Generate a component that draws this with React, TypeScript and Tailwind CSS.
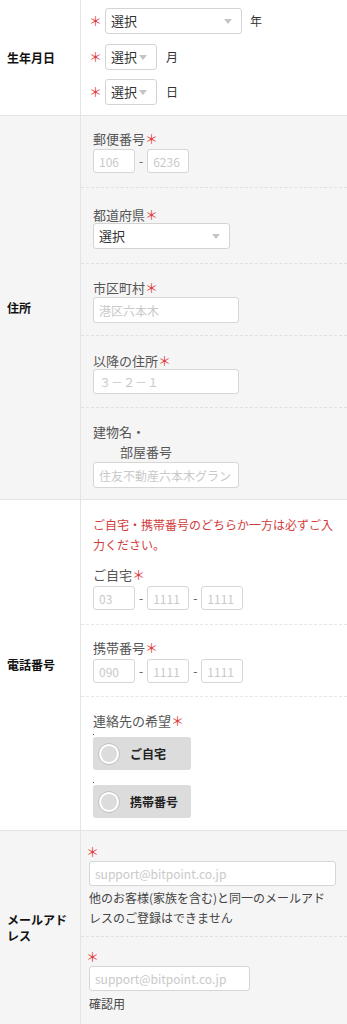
import React from "react";

const font = { fontFamily: '"Noto Sans CJK JP", "Noto Sans", sans-serif' };

const Star = () => <span className="text-[#e03c3c]">＊</span>;

// gray caret used by the fake selects
const Caret = () => (
  <svg width="8" height="5" viewBox="0 0 8 5" className="shrink-0">
    <path d="M0 0 L8 0 L4 5 Z" fill="#c4c4c4" />
  </svg>
);

const Select = ({ width, height = 26 }: { width: number; height?: number }) => (
  <div
    className="flex items-center justify-between border border-[#d4d4d4] rounded-[3px] bg-white pl-[5px] pr-[9px] text-[13px] text-[#333]"
    style={{ width, height }}
  >
    <span>選択</span>
    <Caret />
  </div>
);

const Input = ({
  width,
  height = 24,
  placeholder,
}: {
  width: number;
  height?: number;
  placeholder: string;
}) => (
  <input
    readOnly
    placeholder={placeholder}
    className="block border border-[#d6d6d6] rounded-[3px] bg-white px-[5px] text-[12px] text-[#333] placeholder:text-[#c9c9c9] outline-none"
    style={{ width, height }}
  />
);

const Dash = () => <span className="text-[12px] text-[#555] px-[4px]">-</span>;

const Section = ({
  label,
  gray,
  children,
}: {
  label: React.ReactNode;
  gray?: boolean;
  children: React.ReactNode;
}) => (
  <div className={`flex border-b border-[#e4e4e4] ${gray ? "bg-[#f5f5f5]" : "bg-white"}`}>
    <div className="w-[81px] shrink-0 flex items-center px-[7px] border-r border-[#e4e4e4] text-[12px] leading-[16px] font-bold text-[#111]">
      {label}
    </div>
    <div className="flex-1 min-w-0">{children}</div>
  </div>
);

const Label = ({ children }: { children: React.ReactNode }) => (
  <div className="text-[13px] leading-[16px] text-[#555]">{children}</div>
);

const Radio = ({ text }: { text: string }) => (
  <div>
    <div className="w-[1px] h-[1px] bg-[#555]" />
    <div className="mt-[2px] w-[98px] h-[33px] rounded-[3px] bg-[#dcdcdc] flex items-center pl-[5px] gap-[10px]">
      <div className="w-[22px] h-[22px] rounded-full border border-[#bfbfbf] bg-white p-[2px]">
        <div className="w-full h-full rounded-full bg-[#dcdcdc]" />
      </div>
      <span className="text-[12px] font-bold text-[#222]">{text}</span>
    </div>
  </div>
);

export default function App() {
  return (
    <div className="w-[347px] bg-white" style={font}>
      {/* 生年月日 */}
      <Section label="生年月日">
        <div className="flex flex-col pt-[8px] pb-[10px] pl-[8px]">
          <div className="flex items-center">
            <span className="w-[13px] text-[13px] text-center text-[#e03c3c]">＊</span>
            <div className="ml-[3px]">
              <Select width={137} />
            </div>
            <span className="ml-[8px] text-[12px] text-[#333]">年</span>
          </div>
          <div className="flex items-center mt-[10px]">
            <span className="w-[13px] text-[13px] text-center text-[#e03c3c]">＊</span>
            <div className="ml-[3px]">
              <Select width={52} />
            </div>
            <span className="ml-[9px] text-[12px] text-[#333]">月</span>
          </div>
          <div className="flex items-center mt-[9px]">
            <span className="w-[13px] text-[13px] text-center text-[#e03c3c]">＊</span>
            <div className="ml-[3px]">
              <Select width={52} />
            </div>
            <span className="ml-[9px] text-[12px] text-[#333]">日</span>
          </div>
        </div>
      </Section>

      {/* 住所 */}
      <Section label="住所" gray>
        <div className="px-[12px] pt-[15px] pb-[14px] border-b border-dashed border-[#e0e0e0]">
          <Label>
            郵便番号<Star />
          </Label>
          <div className="mt-[2px] flex items-center">
            <Input width={42} placeholder="106" />
            <Dash />
            <Input width={42} placeholder="6236" />
          </div>
        </div>
        <div className="px-[12px] pt-[19px] pb-[14px] border-b border-dashed border-[#e0e0e0]">
          <Label>
            都道府県<Star />
          </Label>
          <Select width={137} />
        </div>
        <div className="px-[12px] pt-[16px] pb-[12px] border-b border-dashed border-[#e0e0e0]">
          <Label>
            市区町村<Star />
          </Label>
          <div className="mt-[1px]">
            <Input width={146} height={26} placeholder="港区六本木" />
          </div>
        </div>
        <div className="px-[12px] pt-[17px] pb-[13px] border-b border-dashed border-[#e0e0e0]">
          <Label>
            以降の住所<Star />
          </Label>
          <Input width={146} height={25} placeholder="３－２－１" />
        </div>
        <div className="px-[12px] pt-[14px] pb-[11px]">
          <div className="text-[13px] leading-[20px] text-[#555]">建物名・</div>
          <div className="text-[13px] leading-[20px] text-[#555] pl-[27px]">部屋番号</div>
          <Input width={146} height={26} placeholder="住友不動産六本木グランドタワー" />
        </div>
      </Section>

      {/* 電話番号 */}
      <Section label="電話番号">
        <div className="px-[12px] pt-[15px] pb-[14px] border-b border-dashed border-[#e6e6e6]">
          <div className="text-[12px] leading-[20px] text-[#d23c3c]">
            ご自宅・携帯番号のどちらか一方は必ずご入力ください。
          </div>
          <div className="mt-[10px] text-[13px] leading-[20px] text-[#555]">
            ご自宅<Star />
          </div>
          <div className="mt-[1px] flex items-center">
            <Input width={42} placeholder="03" />
            <Dash />
            <Input width={42} placeholder="1111" />
            <Dash />
            <Input width={42} placeholder="1111" />
          </div>
        </div>
        <div className="px-[12px] pt-[13px] pb-[13px] border-b border-dashed border-[#e6e6e6]">
          <div className="text-[13px] leading-[20px] text-[#555]">
            携帯番号<Star />
          </div>
          <div className="mt-[1px] flex items-center">
            <Input width={42} placeholder="090" />
            <Dash />
            <Input width={42} placeholder="1111" />
            <Dash />
            <Input width={42} placeholder="1111" />
          </div>
        </div>
        <div className="px-[12px] pt-[14px] pb-[12px]">
          <div className="text-[13px] leading-[20px] text-[#555]">
            連絡先の希望<Star />
          </div>
          <div className="mt-[3px] flex flex-col gap-[12px]">
            <Radio text="ご自宅" />
            <Radio text="携帯番号" />
          </div>
        </div>
      </Section>

      {/* メールアドレス */}
      <Section
        label={
          <span>
            メールアド
            <br />
            レス
          </span>
        }
        gray
      >
        <div className="pl-[8px] pr-[11px] pt-[13px] pb-[8px] border-b border-dashed border-[#e0e0e0]">
          <div className="text-[13px] leading-[16px] -ml-[3px]">
            <Star />
          </div>
          <div className="mt-[1px]">
            <Input width={247} height={25} placeholder="support@bitpoint.co.jp" />
          </div>
          <div className="mt-[2px] text-[12px] leading-[20px] text-[#444]">
            他のお客様(家族を含む)と同一のメールアドレスのご登録はできません
          </div>
        </div>
        <div className="pl-[8px] pr-[11px] pt-[12px] pb-[10px]">
          <div className="text-[13px] leading-[16px] -ml-[3px]">
            <Star />
          </div>
          <div className="mt-[1px]">
            <Input width={161} height={25} placeholder="support@bitpoint.co.jp" />
          </div>
          <div className="mt-[3px] text-[12px] leading-[20px] text-[#444]">確認用</div>
        </div>
      </Section>
    </div>
  );
}
